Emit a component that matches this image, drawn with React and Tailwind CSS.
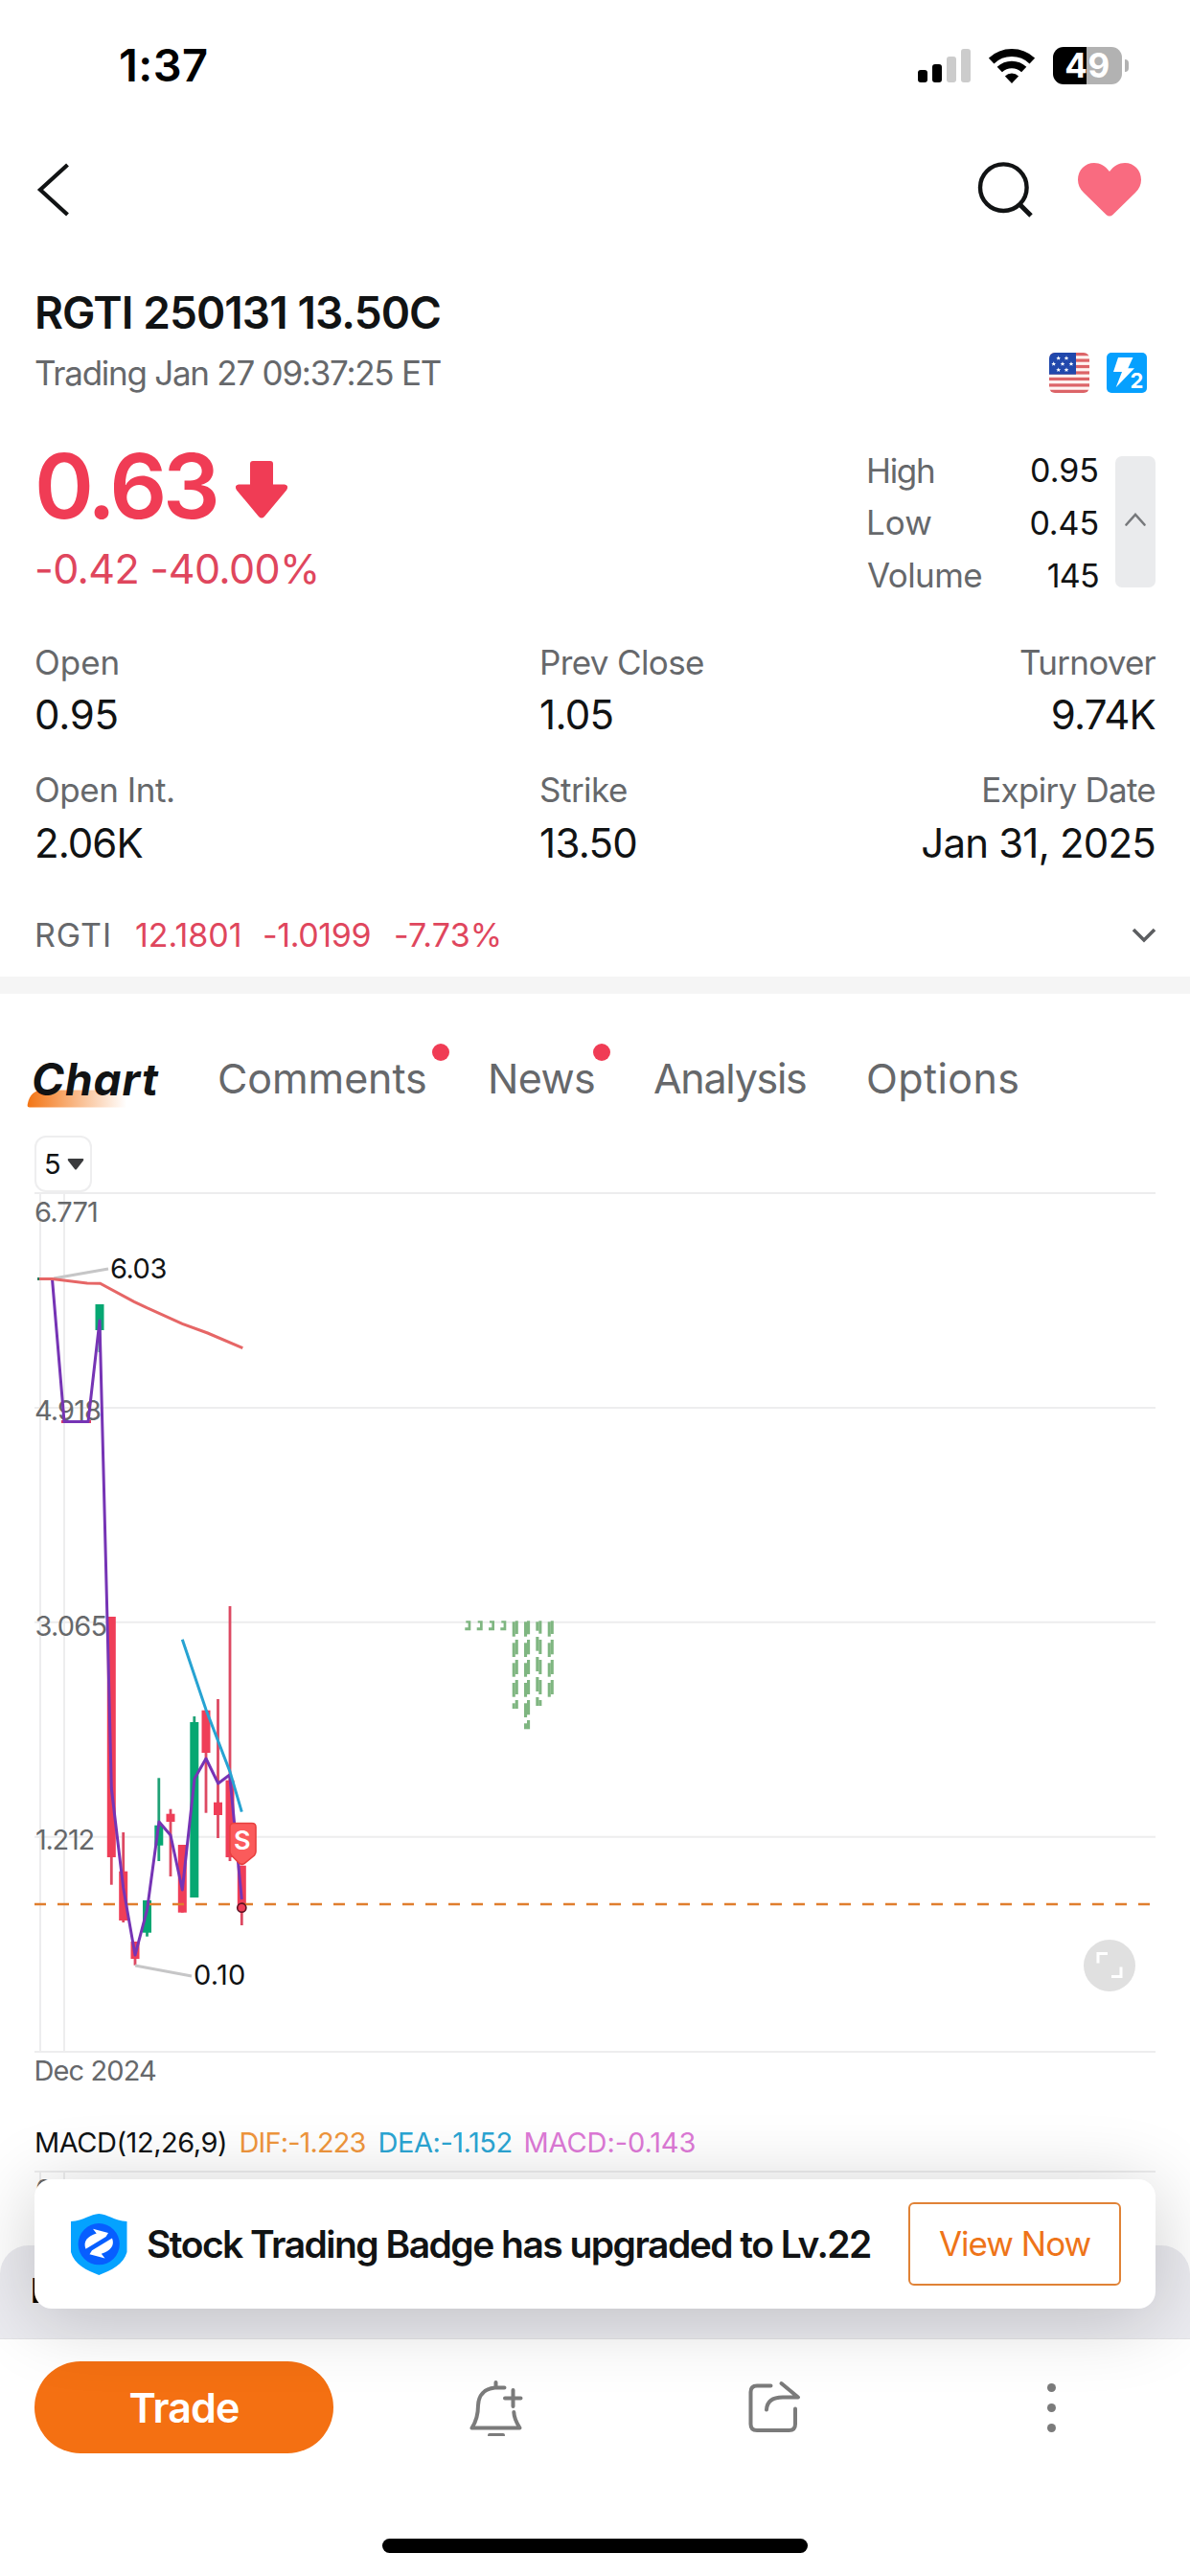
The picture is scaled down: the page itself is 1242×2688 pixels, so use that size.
import React from "react";

function Text({ className = "", children }) {
  return <span className={`block leading-none whitespace-nowrap ${className}`}>{children}</span>;
}

function StatusBar() {
  return (
    <div className="flex h-[136px] shrink-0 items-center justify-between pl-[124px] pr-[64px]">
      <Text className="-mt-[2px] text-[47px] font-semibold tracking-[0.4px] text-black">1:37</Text>
      <div className="flex h-[39px] items-center">
        <div className="flex h-[35px] items-end gap-[5px]">
          <div className="h-[13px] w-[10px] rounded-[3px] bg-black" />
          <div className="h-[19px] w-[10px] rounded-[3px] bg-black" />
          <div className="h-[27px] w-[10px] rounded-[3px] bg-[#cccccc]" />
          <div className="h-[35px] w-[10px] rounded-[3px] bg-[#cccccc]" />
        </div>
        <svg className="ml-[19px]" width="48" height="37" viewBox="0 0 48 37" fill="none" stroke="#000">
          <path d="M2.7 13.5A31 31 0 0 1 45.3 13.5" strokeWidth="8" />
          <path d="M11.3 22.6A18.5 18.5 0 0 1 36.7 22.6" strokeWidth="7.6" />
          <path d="M24 37L16.9 29.4A10 10 0 0 1 31.1 29.4Z" fill="#000" stroke="none" />
        </svg>
        <div className="ml-[19px] flex h-[39px] w-[72px] items-center justify-center rounded-[11px] bg-[linear-gradient(90deg,#000_0,#000_35px,#b2b2b2_35px)]">
          <Text className="text-[35px] font-bold tracking-[0.5px] text-white">49</Text>
        </div>
        <div className="ml-[3px] h-[13px] w-[4px] rounded-r-full bg-[#b2b2b2]" />
      </div>
    </div>
  );
}

function NavBar() {
  return (
    <div className="flex h-[124px] shrink-0 items-center justify-between pl-[38px] pr-[51px]">
      <svg width="36" height="58" viewBox="0 0 36 58" fill="none" stroke="#111314" strokeWidth="4.2">
        <path d="M32.5 3L4 29L32.5 55" />
      </svg>
      <div className="flex items-center">
        <svg width="60" height="60" viewBox="0 0 60 60" fill="none" stroke="#111314" strokeWidth="4.4">
          <circle cx="28.3" cy="27.7" r="24.3" />
          <path d="M45 45L57 57" strokeWidth="5" />
        </svg>
        <svg className="ml-[46px]" width="66" height="56" viewBox="0 0 66 56" fill="#f96b80">
          <path d="M33 9C28.500 3 23 0 17 0C7.500 0 0 7.500 0 17.500C0 23 2 27 6 31L29.500 54Q33 57 36.500 54L60 31C64 27 66 23 66 17.500C66 7.500 58.500 0 49 0C43 0 37.500 3 33 9Z" />
        </svg>
      </div>
    </div>
  );
}

const stars = [[9.7, 5.7], [18, 5.7], [4.7, 11.7], [14, 11.7], [23, 11.7], [9.7, 18], [18, 18]];

function Flag() {
  return (
    <svg className="rounded-[6px]" width="42" height="42" viewBox="0 0 42 42">
      <rect width="42" height="42" fill="#fff4f2" />
      {[0, 2, 4, 6, 8, 10, 12].map((i) => (
        <rect key={i} y={i * 3.23} width="42" height="3.23" fill="#dc6468" />
      ))}
      <rect width="28" height="22.7" fill="#2148ac" />
      {stars.map(([x, y]) => (
        <path
          key={`${x}-${y}`}
          transform={`translate(${x} ${y})`}
          d="M0 -2.500L.7 -.8L2.400 -.8L1.100 .4L1.500 2.100L0 1.100L-1.500 2.100L-1.100 .4L-2.400 -.8L-.7 -.8Z"
          fill="#fff"
        />
      ))}
    </svg>
  );
}

function Header() {
  return (
    <div className="shrink-0 pt-[39px] pl-[36px] pr-[45px]">
      <div className="flex h-[54px] items-center">
        <Text className="text-[46px] font-semibold tracking-[-0.92px]">RGTI 250131 13.50C</Text>
      </div>
      <div className="mt-[15px] flex h-[42px] items-center justify-between">
        <Text className="text-[35px] tracking-[-1.26px] text-[#66686b]">Trading Jan 27 09:37:25 ET</Text>
        <div className="flex gap-[18px]">
          <Flag />
          <svg width="42" height="42" viewBox="0 0 42 42">
            <rect width="42" height="42" rx="5" fill="#06a0fe" />
            <path d="M12 5H27.500L22.300 16.300H29L9.700 36.300L16 20H7Z" fill="#fff" />
            <text x="24.500" y="36.700" fontSize="22" fontWeight="700" fill="#fff" stroke="#06a0fe" strokeWidth="3" paintOrder="stroke">2</text>
          </svg>
        </div>
      </div>
    </div>
  );
}

function SideRow({ label, value, labelClass, valueClass }) {
  return (
    <div className="flex h-[54.67px] items-center justify-between">
      <Text className={`text-[35px] text-[#66686b] ${labelClass}`}>{label}</Text>
      <Text className={`text-[34px] ${valueClass}`}>{value}</Text>
    </div>
  );
}

function Quote() {
  return (
    <div className="mt-[52px] flex h-[166px] shrink-0 justify-between pl-[36px] pr-[36px] text-[#f03c55]">
      <div>
        <div className="flex h-[89px] items-center">
          <Text className="w-[210px] text-[94px] font-semibold tracking-[-4.29px]">0.63</Text>
          <svg className="mt-[8px]" width="54" height="60" viewBox="0 0 54 60" fill="#f03c55">
            <path d="M18 0H36Q39 0 39 3V24.500H51Q56 25.500 53 30.500L30 58Q27 61 24 58L1 30.500Q-2 25.500 3 24.500H15V3Q15 0 18 0Z" />
          </svg>
        </div>
        <div className="mt-[17px] flex h-[50px] items-center">
          <Text className="text-[43px] tracking-[-0.62px] text-[#df465d]">-0.42 -40.00%</Text>
        </div>
      </div>
      <div className="flex text-[#111314]">
        <div className="w-[243px] pt-[2px]">
          <SideRow label="High" value="0.95" labelClass="tracking-[-1.32px]" valueClass="" />
          <SideRow label="Low" value="0.45" labelClass="" valueClass="tracking-[-0.1px]" />
          <SideRow label="Volume" value="145" labelClass="ml-[1px] tracking-[-0.6px]" valueClass="tracking-[-0.7px]" />
        </div>
        <div className="mt-[14px] ml-[17px] flex h-[137px] w-[42px] items-center justify-center rounded-[7px] bg-[#eaebed]">
          <svg className="-mt-[6px]" width="22" height="14" viewBox="0 0 22 14" fill="none" stroke="#77797c" strokeWidth="2.600" strokeLinecap="round">
            <path d="M1.500 12.500L11 2L20.500 12.500" />
          </svg>
        </div>
      </div>
    </div>
  );
}

function Stat({ label, value, labelClass, valueClass, right }) {
  return (
    <div className={`flex h-[133.6px] flex-col ${right ? "items-end" : "items-start"}`}>
      <div className="flex h-[44px] items-center">
        <Text className={`text-[35px] text-[#66686b] ${labelClass}`}>{label}</Text>
      </div>
      <div className="flex h-[66px] items-center">
        <Text className={`text-[42px] ${valueClass}`}>{value}</Text>
      </div>
    </div>
  );
}

function Stats() {
  return (
    <div className="mt-[41px] grid h-[267px] shrink-0 grid-cols-[527px_322px_321px] pl-[36px]">
      <Stat label="Open" value="0.95" labelClass="" valueClass="tracking-[-0.3px]" />
      <Stat label="Prev Close" value="1.05" labelClass="tracking-[-0.63px]" valueClass="tracking-[-0.7px]" />
      <Stat right label="Turnover" value="9.74K" labelClass="tracking-[-0.75px]" valueClass="tracking-[-0.8px]" />
      <Stat label="Open Int." value="2.06K" labelClass="tracking-[-0.46px]" valueClass="tracking-[-0.95px]" />
      <Stat label="Strike" value="13.50" labelClass="tracking-[-0.51px]" valueClass="tracking-[-0.7px]" />
      <Stat right label="Expiry Date" value="Jan 31, 2025" labelClass="tracking-[-0.73px]" valueClass="tracking-[-0.8px]" />
    </div>
  );
}

function Underlying() {
  return (
    <div className="flex h-[79px] shrink-0 items-center pl-[36px] pr-[35px] text-[34px] text-[#df465d]">
      <Text className="w-[105px] tracking-[0.9px] text-[#66686b]">RGTI</Text>
      <Text className="w-[133px]">12.1801</Text>
      <Text className="w-[137px] tracking-[-0.38px]">-1.0199</Text>
      <Text className="flex-1 tracking-[0.2px]">-7.73%</Text>
      <svg width="26" height="18" viewBox="0 0 26 18" fill="none" stroke="#5c5e61" strokeWidth="3.600">
        <path d="M2 3L13 14L24 3" />
      </svg>
    </div>
  );
}

function Tabs() {
  return (
    <div className="flex h-[148px] shrink-0 items-start pt-[63px] text-[43px] text-[#66686b]">
      <div className="relative flex h-[52px] w-[227px] items-center pl-[33px]">
        <svg className="absolute top-[37px] left-[28px]" width="104" height="19" viewBox="0 0 104 19">
          <defs>
            <linearGradient id="tabGlow" x1="0" x2="1" y1="0" y2="0">
              <stop offset="0" stopColor="#f37515" />
              <stop offset="1" stopColor="#f37515" stopOpacity="0" />
            </linearGradient>
          </defs>
          <path d="M3 18.500Q0 18.500 .8 15C3 5 8 .5 17 .5H104V18.500Z" fill="url(#tabGlow)" />
        </svg>
        <Text className="relative text-[46px] font-bold tracking-[0.9px] text-[#111314] italic">Chart</Text>
      </div>
      <div className="relative flex h-[50px] w-[282px] items-center">
        <Text className="tracking-[-0.1px]">Comments</Text>
        <div className="absolute -top-[11px] left-[224px] size-[18px] rounded-full bg-[#f03c55]" />
      </div>
      <div className="relative flex h-[50px] w-[173px] items-center">
        <Text className="tracking-[-0.6px]">News</Text>
        <div className="absolute -top-[11px] left-[110px] size-[18px] rounded-full bg-[#f03c55]" />
      </div>
      <div className="flex h-[50px] w-[222px] items-center">
        <Text className="tracking-[-1.3px]">Analysis</Text>
      </div>
      <div className="flex h-[50px] items-center">
        <Text className="tracking-[0.4px]">Options</Text>
      </div>
    </div>
  );
}

// x centre, wick top, wick bottom, body top, body bottom, direction
const candles = [
  [104, 1361, 1411, 1361, 1388, "up"],
  [116.3, 1687, 1966.7, 1687, 1938, "down"],
  [128.7, 1912, 2006, 1952.7, 2004, "down"],
  [141, 2026, 2050.7, 2026, 2044, "down"],
  [153.5, 1983, 2020.7, 1983, 2016.7, "up"],
  [165.8, 1855.3, 1942, 1904.7, 1925.7, "up"],
  [178, 1887.7, 1958, 1892.7, 1901, "down"],
  [190.3, 1925, 1995.7, 1925, 1995.7, "down"],
  [202.8, 1791, 1980, 1797, 1980, "up"],
  [215, 1784.7, 1891.7, 1784.7, 1829, "down"],
  [227.5, 1773, 1918, 1880.7, 1894, "down"],
  [240, 1676, 1942, 1857.7, 1938, "down"],
  [252.3, 1946.7, 2009, 1946.7, 1988, "down"],
];
const tone = { up: "#06a772", down: "#ef3e58" };
const wick = { up: "#1fa176", down: "#dd4962" };

// column x, then [x offset, top, bottom] pieces of each histogram bar
const bars = [
  [534.7, [[3, 1691.3, 1705], [0, 1692.3, 1707.7], [3, 1711, 1726.3], [0, 1714.3, 1729], [3, 1732, 1747], [0, 1735.3, 1749.7], [3, 1753, 1768], [0, 1756, 1770.7], [3, 1774, 1783], [0, 1777.3, 1783]]],
  [547, [[3, 1691.3, 1705.3], [0, 1692.3, 1707.7], [3, 1711, 1726.3], [0, 1714.3, 1729], [3, 1732, 1747], [0, 1735.3, 1749.7], [3, 1753, 1768], [0, 1756, 1770.7], [3, 1774, 1789.3], [0, 1777.3, 1792], [3, 1795, 1804.3], [0, 1798.3, 1804.3]]],
  [559.3, [[0, 1692.3, 1701.7], [3, 1691.3, 1704.7], [0, 1708, 1722.7], [3, 1711, 1726], [0, 1729, 1744], [3, 1732, 1747], [0, 1750, 1765], [3, 1753, 1768], [0, 1771, 1780], [3, 1774, 1780]]],
  [571.7, [[3, 1691.3, 1705], [0, 1692.3, 1707.7], [3, 1711, 1726.3], [0, 1714.3, 1729], [3, 1732, 1747], [0, 1735.3, 1749.7], [3, 1753, 1768], [0, 1756, 1770.7]]],
];

function Chart() {
  return (
    <svg className="block shrink-0" width="1242" height="961" viewBox="0 1244 1242 961" fontSize="29" fill="none">
      <g stroke="#ededee" strokeWidth="2">
        <path d="M42 1245V2141M67 1245V2141" />
        <path d="M36 1245H1206M36 1469H1206M36 1692.700H1206M36 1916.700H1206M36 2141H1206" />
      </g>
      <g fill="#7fb681">
        {[485.3, 497.7, 510, 522.3].map((x) => (
          <path key={x} transform={`translate(${x} 1691.3)`} d="M1 0H6V10H0V7H3.300V2.300H1Z" />
        ))}
        {bars.map(([x, parts]) =>
          parts.map(([dx, top, bottom]) => (
            <rect key={`${x}-${dx}-${top}`} x={x + dx} y={top} width="3.100" height={bottom - top} />
          ))
        )}
      </g>
      {candles.map(([x, wt, wb, bt, bb, dir]) => (
        <g key={x}>
          <rect x={x - 1.4} y={wt} width="2.800" height={wb - wt} fill={wick[dir]} />
          <rect x={x - 4.5} y={bt} width="9" height={bb - bt} fill={tone[dir]} />
        </g>
      ))}
      <path d="M39 1334.500H44" stroke="#2b7a5c" strokeWidth="3" />
      <path d="M64 1483.500H95" stroke="#dd3a66" strokeWidth="3" />
      <path d="M36 1987H1202" stroke="#e07e2e" strokeWidth="2.400" strokeDasharray="12 12" />
      <g fill="#66686b">
        <text x="36" y="1274.700" letterSpacing="-0.83">6.771</text>
        <text x="36" y="1482.300" letterSpacing="-0.92">4.918</text>
        <text x="36.500" y="1706.500" letterSpacing="-0.79">3.065</text>
        <text x="37" y="1930" letterSpacing="-1.3">1.212</text>
        <text x="35.500" y="2171" letterSpacing="-0.9">Dec 2024</text>
      </g>
      <path d="M56 1334L113 1324M141 2051L200 2062" stroke="#c6c6c7" strokeWidth="3" />
      <path d="M54.500 1334.500L67 1483.500H92L104 1378L111.700 1680L116.300 1866L128.700 1970L141 2040L153.500 1993L166 1901L178 1915L190.300 1972L203 1856L215 1835L227.700 1861L239.700 1852L252.300 1982" stroke="#7634b5" strokeWidth="3" strokeLinejoin="round" />
      <path d="M41 1334.500H54.500L91 1339L104.500 1339.300L140 1358.300L153.300 1364.700L190.300 1381.300L216.700 1391L253.300 1406.700" stroke="#e66666" strokeWidth="3" />
      <path d="M190.300 1710.700L215 1784L240 1848.700L252.300 1890.700" stroke="#27a3d2" strokeWidth="3" />
      <g fill="#111314">
        <text x="115" y="1333.700" letterSpacing="-0.5">6.03</text>
        <text x="202" y="2071.300" letterSpacing="0.3">0.10</text>
      </g>
      <path d="M244 1902.500H263Q267 1902.500 267 1906.500V1932Q267 1934 265.500 1936L255 1944.500Q252.500 1946 250 1944.500L241.500 1936Q240 1934 240 1932V1906.500Q240 1902.500 244 1902.500Z" fill="#fb5b5b" stroke="#e8403f" strokeWidth="1.600" />
      <text x="252.700" y="1930.300" textAnchor="middle" fontSize="27" fontWeight="600" fill="#fff">S</text>
      <circle cx="252.300" cy="1990.700" r="4.600" fill="#ef3e58" stroke="#5e1022" strokeWidth="1.600" />
      <circle cx="1158" cy="2051" r="27" fill="#e0e0e0" />
      <path d="M1156 2038.500H1146V2048.500M1160 2062.500H1170V2052.500" stroke="#fff" strokeWidth="3" />
    </svg>
  );
}

function IndicatorLegend() {
  return (
    <div className="flex h-[60px] shrink-0 items-center pl-[36px] text-[29px]">
      <Text className="w-[213.5px] tracking-[-0.46px]">MACD(12,26,9)</Text>
      <Text className="w-[145px] tracking-[-0.89px] text-[#ef963c]">DIF:-1.223</Text>
      <Text className="w-[152px] tracking-[-0.46px] text-[#2ba5d3]">DEA:-1.152</Text>
      <Text className="tracking-[-0.1px] text-[#dd79d6]">MACD:-0.143</Text>
    </div>
  );
}

function IndicatorPane() {
  return (
    <div className="h-[78px] shrink-0 px-[36px]">
      <div className="flex h-full border-t-2 border-[#ededee] text-[29px] text-[#66686b]">
        <div className="ml-[5px] h-full w-[27px] border-x-2 border-[#ededee]">
          <Text className="-ml-[6px] pt-[3px]">0</Text>
        </div>
      </div>
    </div>
  );
}

function UpgradeToast() {
  return (
    <div className="absolute top-[2274px] left-[36px] flex h-[135px] w-[1170px] items-center rounded-[18px] bg-white pl-[38px] pr-[36px] shadow-[0_10px_80px_rgba(0,0,0,0.2)]">
      <svg width="59" height="64" viewBox="0 0 59 64">
        <path d="M29.300 0C38 .5 45 7 58.500 8V40C55 53 42 59 29.300 64C16.500 59 3.500 53 0 40V8C13.500 7 20.500 .5 29.300 0Z" fill="#04a2ff" />
        <circle cx="29.200" cy="31.700" r="21.600" fill="#075eff" />
        <g fill="#fff">
          <path d="M23 15.700L39 20L36.500 24L15.500 36.700C12.500 29 17 23.500 26.700 20.500Z" />
          <path d="M35.500 46.500L19.500 42.200L22 38.200L43 25.500C46 33 41.500 38.700 31.800 41.700Z" />
        </g>
      </svg>
      <Text className="ml-[20px] flex-1 text-[39px] font-semibold tracking-[-1.53px]">Stock Trading Badge has upgraded to Lv.22</Text>
      <div className="flex h-[87px] w-[222px] items-center justify-center rounded-[6px] border-2 border-[#e08236] text-[#ee7419]">
        <Text className="text-[35px] tracking-[-1px]">View Now</Text>
      </div>
    </div>
  );
}

function BottomBar() {
  return (
    <div className="h-[248px] shrink-0 border-t border-[#e3e3e5] bg-white">
      <div className="mt-[23px] flex h-[96px] items-center pl-[36px]">
        <div className="mr-[24px] flex h-[96px] w-[312px] items-center justify-center rounded-full bg-[#f47012] text-white">
          <Text className="text-[43px] font-semibold tracking-[-0.91px]">Trade</Text>
        </div>
        <div className="flex flex-1 justify-center">
          <svg className="ml-[2px]" width="60" height="60" viewBox="0 0 60 60" fill="none" stroke="#7b7b7b" strokeWidth="4" strokeLinecap="round" strokeLinejoin="round">
            <path d="M29.500 4V8.700M38.500 9.500H28.500C17 10.500 11.500 18 11 28C11 38 9.500 44 4.500 51.500H54.500C51 46 48.500 41 48.300 35" />
            <path d="M23 59H37M47.500 12V29M39 20.500H55.500" />
          </svg>
        </div>
        <div className="flex flex-1 justify-center">
          <svg className="ml-[3px]" width="60" height="58" viewBox="0 0 60 58" fill="none" stroke="#7b7b7b" strokeWidth="4" strokeLinecap="round" strokeLinejoin="round">
            <path d="M25.500 6.500H11Q4.500 6.500 4.500 13V46.500Q4.500 53 11 53H44.500Q51 53 51 46.500V30.500" />
            <path d="M36.500 4L54 18.500H38C27 18.500 21.500 23 21 31.500" />
          </svg>
        </div>
        <div className="flex flex-1 flex-col items-center gap-[12px]">
          <div className="size-[9px] rounded-full bg-[#7b7b7b]" />
          <div className="size-[9px] rounded-full bg-[#7b7b7b]" />
          <div className="size-[9px] rounded-full bg-[#7b7b7b]" />
        </div>
      </div>
      <div className="mx-auto mt-[89px] h-[15px] w-[444px] rounded-full bg-black" />
    </div>
  );
}

export default function App() {
  return (
    <div className="relative flex h-[2688px] w-[1242px] flex-col overflow-hidden bg-white font-['Inter','Liberation_Sans',sans-serif] text-[#111314]">
      <StatusBar />
      <NavBar />
      <Header />
      <Quote />
      <Stats />
      <Underlying />
      <div className="mt-[4px] h-[18px] shrink-0 bg-[#f5f5f5]" />
      <Tabs />
      <div className="ml-[36px] flex h-[59px] w-[60px] shrink-0 items-center rounded-[12px] border-2 border-[#eeeeef] pl-[8px]">
        <Text className="text-[29px]">5</Text>
        <svg className="ml-[6px]" width="18" height="12" viewBox="0 0 18 12" fill="#3a3b3d">
          <path d="M1.500 0H16.500Q18 .5 17 2L10 11Q9 12 8 11L1 2Q0 .5 1.500 0Z" />
        </svg>
      </div>
      <Chart />
      <IndicatorLegend />
      <IndicatorPane />
      <div className="h-[97px] shrink-0 rounded-t-[30px] bg-[#ebebf0] pt-[29px] pl-[32px]">
        <Text className="text-[36px] font-bold text-black">E</Text>
      </div>
      <BottomBar />
      <UpgradeToast />
    </div>
  );
}
